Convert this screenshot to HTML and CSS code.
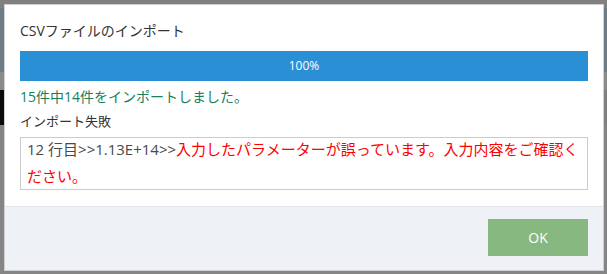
FILE: index.html
```html
<!DOCTYPE html>
<html lang="ja">
<head>
<meta charset="utf-8">
<title>CSVファイルのインポート</title>
<link rel="stylesheet" href="styles.css">
</head>
<body>
<div class="page">
  <div class="page-top"></div>
  <div class="page-header"></div>
  <div class="page-gap"></div>
  <div class="page-nav"><div class="page-nav-dark"></div></div>
  <div class="page-rest"></div>
</div>
<div class="modal" role="dialog">
  <div class="modal-body">
    <h1 class="modal-title">CSVファイルのインポート</h1>
    <div class="progress"><div class="progress-bar">100%</div></div>
    <p class="result">15件中14件をインポートしました。</p>
    <p class="fail-label">インポート失敗</p>
    <div class="error-box">
      <p class="error-text"><span class="error-row">12 行目&gt;&gt;1.13E+14&gt;&gt;</span><span class="error-msg">入力したパラメーターが誤っています。入力内容をご確認ください。</span></p>
    </div>
  </div>
  <div class="modal-footer">
    <button class="btn-ok" type="button">OK</button>
  </div>
</div>
</body>
</html>
```
FILE: styles.css
```css
html, body {
  margin: 0;
  padding: 0;
  width: 607px;
  height: 274px;
  overflow: hidden;
  background: #808080;
  font-family: "Open Sans", "Noto Sans CJK JP", sans-serif;
}

.page {
  display: flex;
  flex-direction: column;
  height: 274px;
}
.page-top { height: 8px; background: #808080; }
.page-header { height: 64px; background: #6e7c85; }
.page-gap { height: 18px; background: #8a8a8a; }
.page-nav { height: 35px; display: flex; background: #808080; }
.page-nav-dark { width: 40px; background: #0b0b0b; }
.page-rest { flex: 1; background: #858585; }

.modal {
  position: fixed;
  left: 4px;
  top: 4px;
  width: 600px;
  box-sizing: border-box;
  border: 1px solid #cfcfcf;
  background: #fff;
}

.modal-body {
  padding: 15px 15px 16px;
}

.modal-title {
  margin: 0;
  font-size: 14px;
  font-weight: normal;
  line-height: 21px;
  color: #333;
}

.progress {
  margin-top: 10px;
  height: 30px;
  background: #e9ecef;
}
.progress-bar {
  width: 100%;
  height: 30px;
  background: #2b8fd6;
  color: #fff;
  font-size: 12px;
  line-height: 30px;
  text-align: center;
}

.result {
  margin: 5px 0 0;
  font-size: 14px;
  line-height: 21px;
  color: #18805b;
}

.fail-label {
  margin: 4px 0 0;
  font-size: 13px;
  line-height: 20px;
  color: #333;
}

.error-box {
  margin-top: 6px;
  height: 51px;
  border: 1px solid #cccccc;
  padding: 0 3px 0 6px;
}
.error-text {
  margin: -2px 0 0;
  font-size: 15px;
  line-height: 27px;
}
.error-row { color: #4a4a4a; }
.error-msg { color: #ff0000; }

.modal-footer {
  display: flex;
  justify-content: flex-end;
  padding: 12px 15px 14px;
  border-top: 1px solid #dfe3ea;
  background: #eef1f6;
}

.btn-ok {
  width: 100px;
  height: 37px;
  border: 0;
  padding: 0;
  background: #87b87f;
  color: #fff;
  font-family: "Open Sans", "Noto Sans CJK JP", sans-serif;
  font-size: 14px;
  line-height: 37px;
}
```
